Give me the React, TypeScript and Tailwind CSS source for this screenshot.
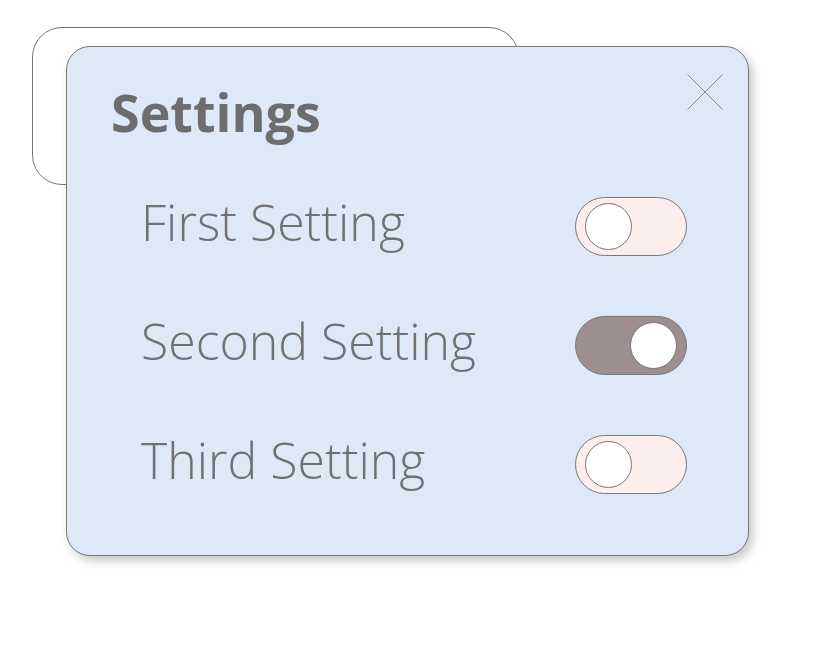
import { useState } from 'react';

interface ToggleProps {
  on: boolean;
  onChange: () => void;
}

function Toggle({ on, onChange }: ToggleProps) {
  return (
    <button
      type="button"
      onClick={onChange}
      className={`flex h-[59px] w-[112px] shrink-0 items-center rounded-full border border-[#777] px-[9px] ${
        on ? 'justify-end bg-[#9d8f8f]' : 'justify-start bg-[#fdeeee]'
      }`}
    >
      <span className="h-[47px] w-[47px] rounded-full border border-[#777] bg-white" />
    </button>
  );
}

function SettingRow({ label, on, onChange }: { label: string; on: boolean; onChange: () => void }) {
  return (
    <div className="flex h-[119px] items-center justify-between pl-[74px] pr-[61px]">
      <span className="mb-[10px] text-[50px] font-light leading-none text-[#707070]">{label}</span>
      <Toggle on={on} onChange={onChange} />
    </div>
  );
}

export default function App() {
  const [values, setValues] = useState([false, true, false]);
  const flip = (i: number) => setValues((v) => v.map((x, j) => (j === i ? !x : x)));

  return (
    <div
      className="min-h-[667px] w-full bg-white pl-[32px] pt-[27px]"
      style={{ fontFamily: '"Open Sans", "Noto Sans", sans-serif' }}
    >
      <div className="h-[158px] w-[487px] rounded-[30px] border border-[#777]" />

      <div className="relative -mt-[139px] ml-[34px] h-[510px] w-[683px] rounded-[24px] border border-[#777] bg-[#dfe8f7] pt-[35px] shadow-[4px_5px_10px_rgba(0,0,0,0.22)]">
        <button type="button" className="absolute right-[25px] top-[27px] h-[36px] w-[36px]">
          <svg viewBox="0 0 36 36" className="h-[36px] w-[36px]">
            <path d="M0.5 0.5 L35.5 35.5 M35.5 0.5 L0.5 35.5" stroke="#8a8a8a" strokeWidth="1" fill="none" />
          </svg>
        </button>

        <h1 className="pl-[44px] text-[52px] font-bold leading-[60px] text-[#6d6d6d]">Settings</h1>

        <div className="mt-[25px] flex flex-col">
          <SettingRow label="First Setting" on={values[0]} onChange={() => flip(0)} />
          <SettingRow label="Second Setting" on={values[1]} onChange={() => flip(1)} />
          <SettingRow label="Third Setting" on={values[2]} onChange={() => flip(2)} />
        </div>
      </div>
    </div>
  );
}
